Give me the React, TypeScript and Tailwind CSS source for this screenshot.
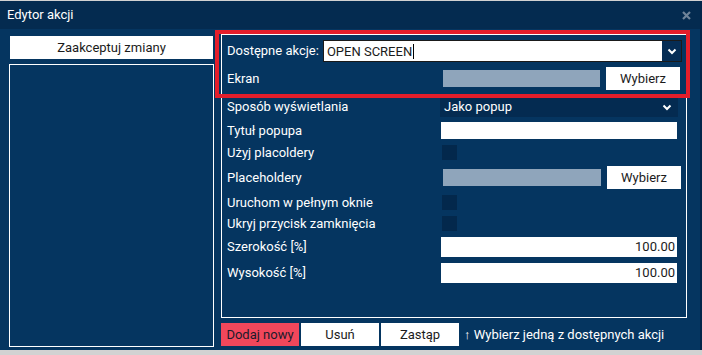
import React from "react";

const FONT = { fontFamily: "Roboto, 'Noto Sans', sans-serif" };

function Chevron() {
	return (
		<svg width="10" height="7" viewBox="0 0 10 7" className="block">
			<polyline points="1.5,1.5 5,5 8.5,1.5" fill="none" stroke="#ffffff" strokeWidth="2" />
		</svg>
	);
}

function Row({ label, mt, h, children }: { label: string; mt: string; h: string; children?: React.ReactNode }) {
	return (
		<div className={`flex items-center ${mt} ${h}`}>
			<div className="w-[213px] shrink-0 whitespace-nowrap text-[13px] text-white">{label}</div>
			{children}
		</div>
	);
}

function PickField({ w }: { w: string }) {
	return (
		<div className="flex items-center">
			<div className={`ml-[3px] h-[17px] ${w} bg-[#8fa5bb]`} />
			<button className="ml-[6px] h-[23px] w-[74px] bg-white text-[13px] text-[#1b1b1b]">Wybierz</button>
		</div>
	);
}

function Check() {
	return <div className="ml-[2px] h-[15px] w-[15px] bg-[#03284c]" />;
}

export default function App() {
	return (
		<div className="h-[355px] w-[702px] overflow-hidden bg-[#d2d2d2] pt-px" style={FONT}>
			<div className="flex h-[349px] flex-col border-r-2 border-[#03264a] bg-[#053560]">
				<div className="flex h-[28px] shrink-0 items-center justify-between bg-[#042b50] pl-[7px] pr-[9px]">
					<span className="text-[13px] text-white">Edytor akcji</span>
					<svg width="9" height="9" viewBox="0 0 9 9" className="block">
						<path d="M1 1 L8 8 M8 1 L1 8" stroke="#6f849a" strokeWidth="2.2" />
					</svg>
				</div>

				<div className="relative flex flex-1">
					<div className="flex w-[214px] shrink-0 flex-col pl-[9px] pt-[7px]">
						<button className="ml-px h-[23px] w-[203px] bg-white text-[13px] text-[#1b1b1b]">Zaakceptuj zmiany</button>
						<div className="mt-[5px] h-[283px] w-[205px] border border-white" />
					</div>

					<div className="ml-[7px] flex flex-col pt-[5px]">
						<div className="flex h-[284px] w-[466px] flex-col border border-white">
							<div className="mt-[5px] flex h-[22px] items-center pl-[5px] pr-[4px]">
								<span className="whitespace-nowrap text-[13px] text-white">Dostępne akcje:</span>
								<div className="ml-[4px] flex h-[22px] flex-1 items-center border border-[#1a1a1a] bg-white">
									<span className="flex-1 pl-[3px] text-[13px] text-[#1b1b1b]">
										OPEN SCREEN<span className="ml-px inline-block h-[15px] w-px translate-y-[3px] bg-black align-baseline" />
									</span>
									<div className="flex h-full w-[19px] items-center justify-center bg-[#052d55]">
										<Chevron />
									</div>
								</div>
							</div>
							<div className="pl-[5px]">
								<Row label="Ekran" mt="mt-[5px]" h="h-[23px]">
									<PickField w="w-[157px]" />
								</Row>
								<Row label="Sposób wyświetlania" mt="mt-[7px]" h="h-[20px]">
									<div className="flex h-[20px] w-[238px] items-center justify-between bg-[#042b51] pl-[4px] pr-[6px]">
										<span className="text-[13px] text-white">Jako popup</span>
										<Chevron />
									</div>
								</Row>
								<Row label="Tytuł popupa" mt="mt-[5px]" h="h-[17px]">
									<div className="ml-px h-[17px] w-[236px] bg-white" />
								</Row>
								<Row label="Użyj placoldery" mt="mt-[6px]" h="h-[15px]">
									<Check />
								</Row>
								<Row label="Placeholdery" mt="mt-[6px]" h="h-[23px]">
									<PickField w="w-[158px]" />
								</Row>
								<Row label="Uruchom w pełnym oknie" mt="mt-[6px]" h="h-[15px]">
									<Check />
								</Row>
								<Row label="Ukryj przycisk zamknięcia" mt="mt-[6px]" h="h-[15px]">
									<Check />
								</Row>
								<Row label="Szerokość [%]" mt="mt-[6px]" h="h-[20px]">
									<div className="ml-px flex h-[20px] w-[236px] items-center justify-end bg-white pr-[2px] text-[13px] text-[#1b1b1b]">100.00</div>
								</Row>
								<Row label="Wysokość [%]" mt="mt-[6px]" h="h-[20px]">
									<div className="ml-px flex h-[20px] w-[236px] items-center justify-end bg-white pr-[2px] text-[13px] text-[#1b1b1b]">100.00</div>
								</Row>
							</div>
						</div>

						<div className="mt-[5px] flex h-[23px] items-center gap-[2px]">
							<button className="h-[23px] w-[78px] bg-[#f1475b] text-[13px] text-[#1b1b2b]">Dodaj nowy</button>
							<button className="h-[23px] w-[78px] bg-white text-[13px] text-[#1b1b1b]">Usuń</button>
							<button className="h-[23px] w-[78px] bg-white text-[13px] text-[#1b1b1b]">Zastąp</button>
							<span className="ml-[3px] whitespace-nowrap text-[13px] text-white">↑ Wybierz jedną z dostępnych akcji</span>
						</div>
					</div>

					{/* highlight around the action picker */}
					<div className="pointer-events-none absolute left-[215px] top-px h-[68px] w-[475px] border-[4px] border-[#e41e2b]" />
				</div>
			</div>
		</div>
	);
}
